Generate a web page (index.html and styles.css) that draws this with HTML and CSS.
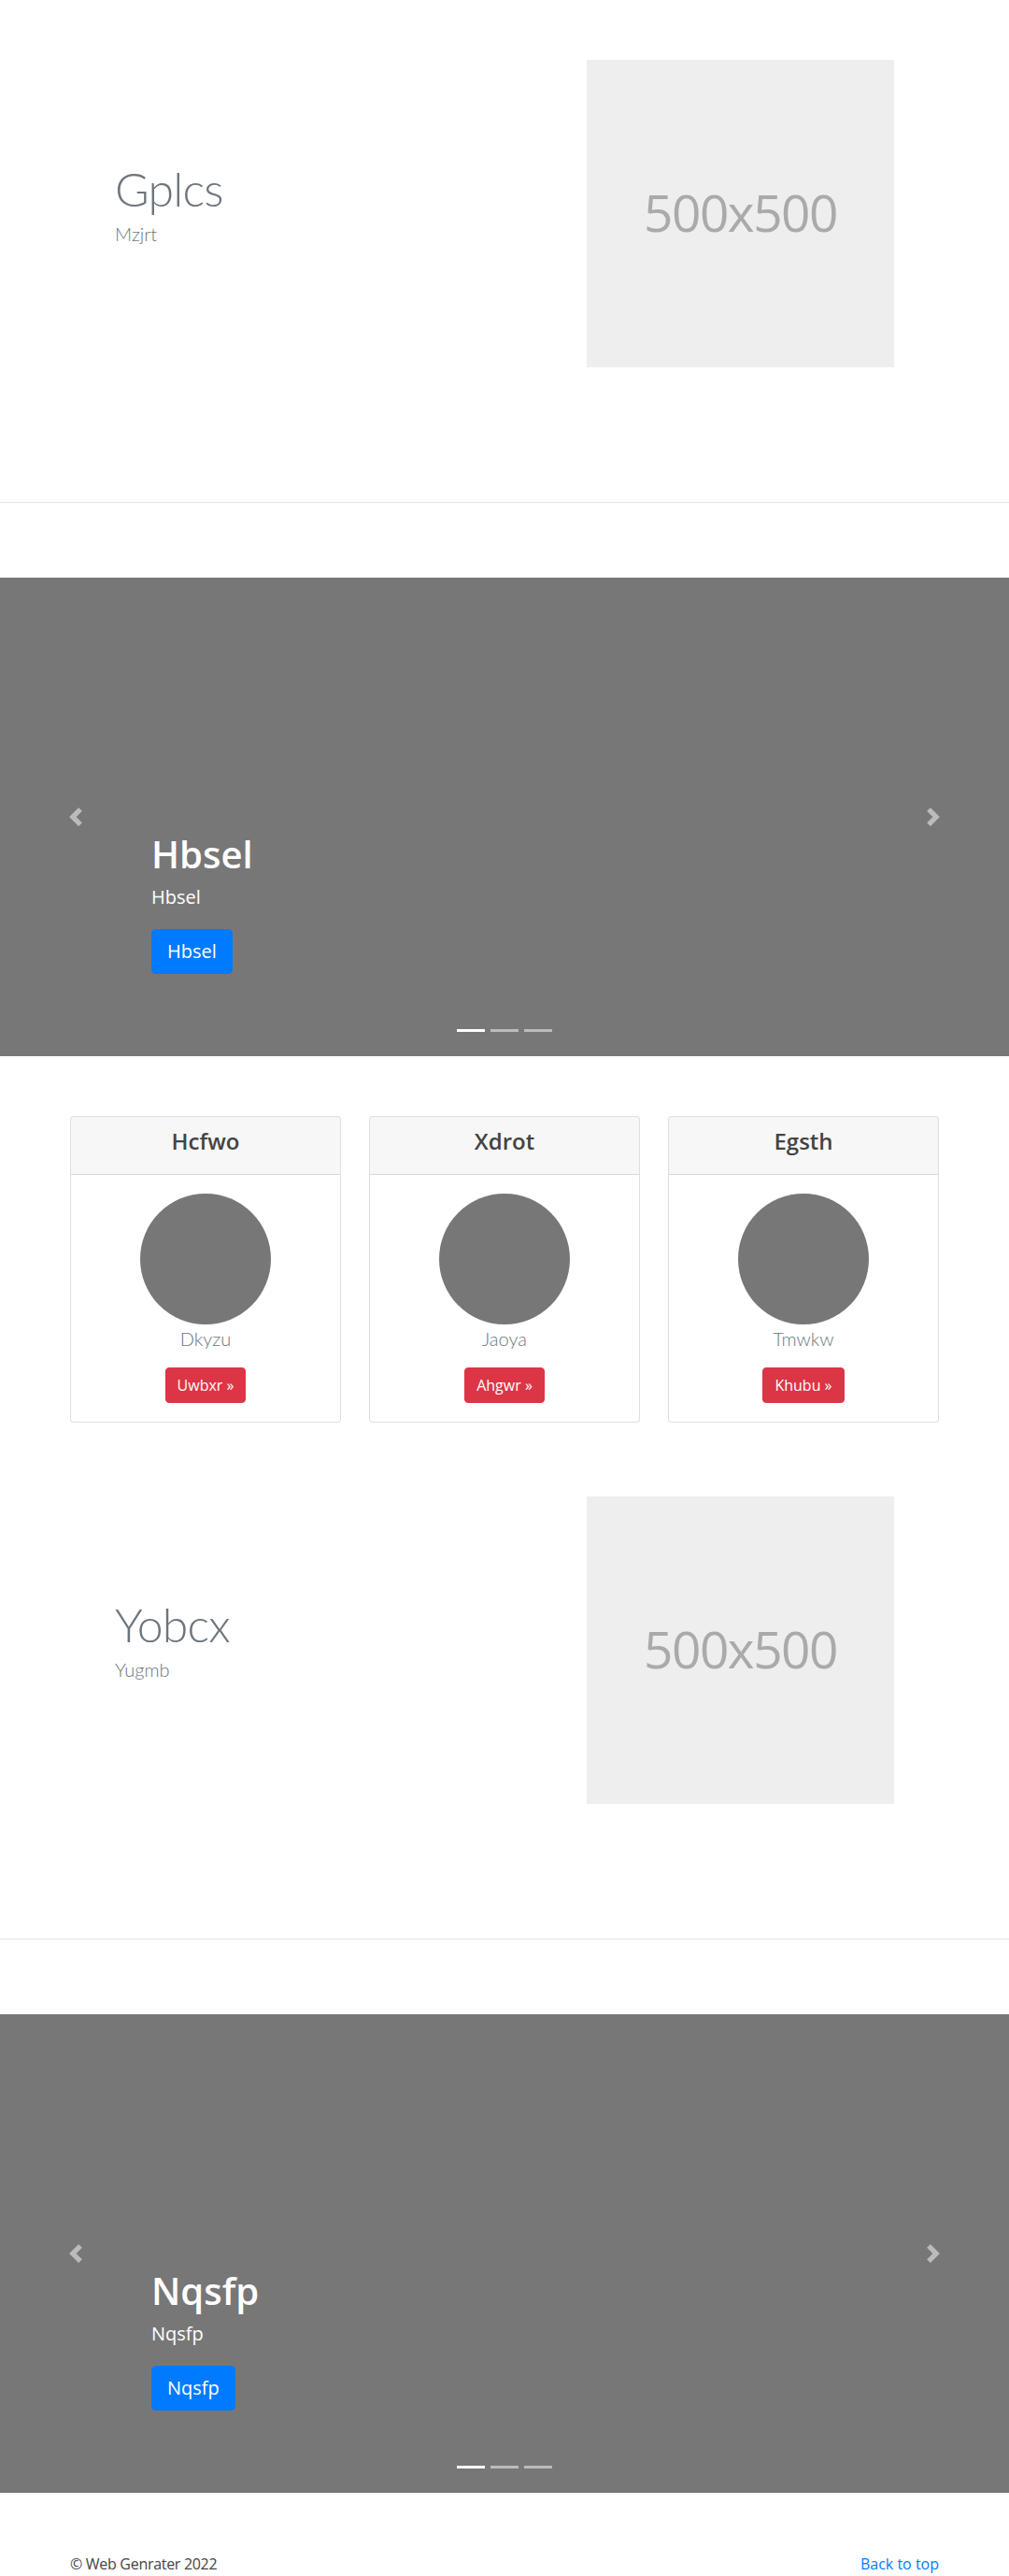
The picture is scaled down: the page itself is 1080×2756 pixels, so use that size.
FILE: index.html
```html
<!DOCTYPE html>
<html lang="en">
<head>
<meta charset="utf-8">
<title>Web Genrater</title>
<link rel="stylesheet" href="styles.css">
</head>
<body>
<section class="feature">
  <div class="feature-inner">
    <div class="feature-text">
      <h2 class="feature-heading">Gplcs</h2>
      <p class="feature-lead">Mzjrt</p>
    </div>
    <div class="feature-media">
      <div class="placeholder">500x500</div>
    </div>
  </div>
</section>
<hr class="divider">
<div class="carousel">
  <div class="caption">
    <h1 class="caption-title">Hbsel</h1>
    <p class="caption-text">Hbsel</p>
    <p class="caption-action"><a class="btn-lg" href="#">Hbsel</a></p>
  </div>
  <a class="ctrl ctrl-prev" href="#"><svg width="20" height="20" viewBox="0 0 8 8"><path d="M5.25 0l-4 4 4 4 1.5-1.5L4.25 4l2.5-2.5L5.25 0z" fill="#fff"/></svg></a>
  <a class="ctrl ctrl-next" href="#"><svg width="20" height="20" viewBox="0 0 8 8"><path d="M2.75 0l-1.5 1.5L3.75 4l-2.5 2.5L2.75 8l4-4-4-4z" fill="#fff"/></svg></a>
  <ol class="indicators"><li class="active"></li><li></li><li></li></ol>
</div>
<div class="cards">
  <div class="card">
    <div class="card-header"><h4 class="card-title">Hcfwo</h4></div>
    <div class="card-body">
      <div class="avatar"></div>
      <p class="card-lead">Dkyzu</p>
      <a class="btn-danger" href="#">Uwbxr &raquo;</a>
    </div>
  </div>
  <div class="card">
    <div class="card-header"><h4 class="card-title">Xdrot</h4></div>
    <div class="card-body">
      <div class="avatar"></div>
      <p class="card-lead">Jaoya</p>
      <a class="btn-danger" href="#">Ahgwr &raquo;</a>
    </div>
  </div>
  <div class="card">
    <div class="card-header"><h4 class="card-title">Egsth</h4></div>
    <div class="card-body">
      <div class="avatar"></div>
      <p class="card-lead">Tmwkw</p>
      <a class="btn-danger" href="#">Khubu &raquo;</a>
    </div>
  </div>
</div>
<section class="feature">
  <div class="feature-inner">
    <div class="feature-text">
      <h2 class="feature-heading">Yobcx</h2>
      <p class="feature-lead">Yugmb</p>
    </div>
    <div class="feature-media">
      <div class="placeholder">500x500</div>
    </div>
  </div>
</section>
<hr class="divider">
<div class="carousel">
  <div class="caption">
    <h1 class="caption-title">Nqsfp</h1>
    <p class="caption-text">Nqsfp</p>
    <p class="caption-action"><a class="btn-lg" href="#">Nqsfp</a></p>
  </div>
  <a class="ctrl ctrl-prev" href="#"><svg width="20" height="20" viewBox="0 0 8 8"><path d="M5.25 0l-4 4 4 4 1.5-1.5L4.25 4l2.5-2.5L5.25 0z" fill="#fff"/></svg></a>
  <a class="ctrl ctrl-next" href="#"><svg width="20" height="20" viewBox="0 0 8 8"><path d="M2.75 0l-1.5 1.5L3.75 4l-2.5 2.5L2.75 8l4-4-4-4z" fill="#fff"/></svg></a>
  <ol class="indicators"><li class="active"></li><li></li><li></li></ol>
</div>
<footer class="footer">
  <p class="footer-copy">&copy; Web Genrater 2022</p>
  <p class="footer-top"><a href="#">Back to top</a></p>
</footer>
</body>
</html>
```
FILE: styles.css
```css
* { box-sizing: border-box; }
html, body { margin: 0; padding: 0; }
body {
  font-family: "Open Sans", "Noto Sans", sans-serif;
  font-size: 16px;
  line-height: 1.5;
  color: #212529;
  background: #fff;
}
a { color: #007bff; text-decoration: none; }

.feature { padding: 64px 0; }
.feature-inner {
  width: 960px;
  margin: 0 auto;
  display: flex;
  align-items: center;
}
.feature-text { flex: 0 0 480px; padding: 0 63px; }
.feature-media {
  flex: 0 0 480px;
  padding: 0 63px;
  display: flex;
  justify-content: flex-end;
}
.feature-heading {
  margin: 0 0 8px;
  font-family: Lato, "Open Sans", sans-serif;
  font-weight: 300;
  font-size: 50px;
  line-height: 1;
  letter-spacing: -0.8px;
  color: #6c757d;
}
.feature-lead {
  margin: 0 0 16px;
  font-family: Lato, "Open Sans", sans-serif;
  font-weight: 300;
  font-size: 20px;
  line-height: 1.5;
  color: #6c757d;
}
.placeholder {
  width: 329px;
  height: 329px;
  background: #eee;
  color: #aaa;
  display: flex;
  align-items: center;
  justify-content: center;
  font-size: 55px;
  letter-spacing: -1.5px;
  padding-bottom: 2px;
}

.divider {
  margin: 80px 0;
  border: 0;
  border-top: 1px solid rgba(0,0,0,.1);
  height: 0;
}

.carousel {
  position: relative;
  height: 512px;
  background: #777;
  margin-bottom: 64px;
  display: flex;
  flex-direction: column;
  justify-content: flex-end;
  padding: 0 15% 48px;
}
.caption { padding: 20px 0; color: #fff; }
.caption-title {
  margin: 0 0 8px;
  font-size: 40px;
  font-weight: 600;
  line-height: 1.2;
}
.caption-text {
  margin: 0 0 20px;
  font-size: 20px;
  line-height: 1.4;
}
.caption-action { margin: 0 0 20px; font-size: 20px; line-height: 1.4; }
.btn-lg {
  display: inline-block;
  padding: 8px 16px;
  font-size: 20px;
  line-height: 1.5;
  color: #fff;
  background: #007bff;
  border: 1px solid #007bff;
  border-radius: 4.8px;
}
.ctrl {
  position: absolute;
  top: 0;
  bottom: 0;
  width: 15%;
  display: flex;
  align-items: center;
  justify-content: center;
  opacity: .5;
}
.ctrl svg { display: block; }
.ctrl-prev { left: 0; }
.ctrl-next { right: 0; }
.indicators {
  position: absolute;
  left: 0;
  right: 0;
  bottom: 16px;
  margin: 0;
  padding: 0;
  list-style: none;
  display: flex;
  justify-content: center;
}
.indicators li {
  width: 30px;
  height: 23px;
  margin: 0 3px;
  border-top: 10px solid transparent;
  border-bottom: 10px solid transparent;
  background: #fff;
  background-clip: padding-box;
  opacity: .5;
}
.indicators li.active { opacity: 1; }

.cards {
  width: 930px;
  margin: 0 auto;
  padding-bottom: 15px;
  display: grid;
  grid-template-columns: repeat(3, 290px);
  column-gap: 30px;
}
.card {
  border: 1px solid rgba(0,0,0,.125);
  border-radius: 4px;
  overflow: hidden;
  background: #fff;
}
.card-header {
  padding: 12px 20px;
  background: rgba(0,0,0,.03);
  border-bottom: 1px solid rgba(0,0,0,.125);
  text-align: center;
}
.card-title {
  margin: 0 0 8px;
  font-size: 24px;
  font-weight: 600;
  line-height: 1.2;
  color: #444;
}
.card-body {
  padding: 20px;
  text-align: center;
}
.avatar {
  width: 140px;
  height: 140px;
  border-radius: 50%;
  background: #777;
  margin: 0 auto;
}
.card-lead {
  margin: 0 0 16px;
  font-family: Lato, "Open Sans", sans-serif;
  font-weight: 300;
  font-size: 20px;
  line-height: 1.5;
  color: #6c757d;
}
.btn-danger {
  display: inline-block;
  padding: 6px 12px;
  font-size: 16px;
  line-height: 1.5;
  color: #fff;
  background: #dc3545;
  border: 1px solid #dc3545;
  border-radius: 4px;
}

.footer {
  width: 930px;
  margin: 0 auto;
  display: flex;
  justify-content: space-between;
}
.footer p { margin: 0 0 16px; }
.footer-copy { color: #444; letter-spacing: -0.3px; }
```
